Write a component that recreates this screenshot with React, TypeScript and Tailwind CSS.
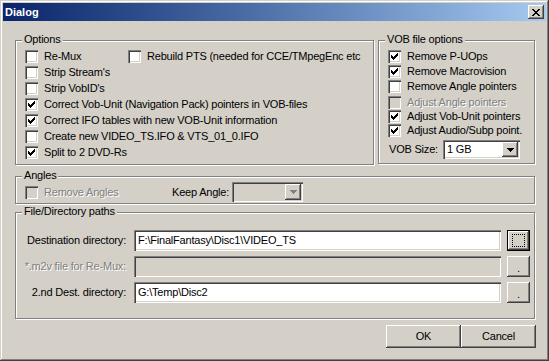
import type { ReactNode } from "react";

const sunken =
  "shadow-[inset_1px_1px_0_#808080,inset_2px_2px_0_#404040,inset_-1px_-1px_0_#fff,inset_-2px_-2px_0_#d4d0c8]";
const raised =
  "shadow-[inset_-1px_-1px_0_#404040,inset_1px_1px_0_#fff,inset_-2px_-2px_0_#808080,inset_2px_2px_0_#d4d0c8]";
const dim = "text-[#808080] [text-shadow:1px_1px_0_#fff]";

function Check({ checked, disabled }: { checked?: boolean; disabled?: boolean }) {
  return (
    <span
      className={
        "flex h-[13px] w-[13px] shrink-0 items-center justify-center " +
        sunken +
        (disabled ? " bg-[#d4d0c8]" : " bg-white")
      }
    >
      {checked && (
        <svg width="7" height="7" viewBox="0 0 7 7" shapeRendering="crispEdges">
          <path
            d="M0 2h1v3H0z M1 3h1v3H1z M2 4h1v3H2z M3 3h1v3H3z M4 2h1v3H4z M5 1h1v3H5z M6 0h1v3H6z"
            fill={disabled ? "#808080" : "#000"}
          />
        </svg>
      )}
    </span>
  );
}

function Row({
  checked,
  disabled,
  children,
  className = "h-[16px]",
}: {
  checked?: boolean;
  disabled?: boolean;
  children: ReactNode;
  className?: string;
}) {
  return (
    <div className={"flex items-center gap-[6px] whitespace-nowrap " + className}>
      <Check checked={checked} disabled={disabled} />
      <span className={disabled ? dim : ""}>{children}</span>
    </div>
  );
}

function Group({
  title,
  className,
  children,
}: {
  title: string;
  className: string;
  children: ReactNode;
}) {
  return (
    <div
      className={
        "relative border border-[#808080] shadow-[inset_1px_1px_0_#fff,1px_1px_0_#fff] " + className
      }
    >
      <span className="absolute -top-[8px] left-[6px] bg-[#d4d0c8] px-[2px] leading-[13px]">
        {title}
      </span>
      {children}
    </div>
  );
}

function Arrow({ disabled }: { disabled?: boolean }) {
  return (
    <span className={"flex h-full w-[16px] shrink-0 items-center justify-center bg-[#d4d0c8] " + raised}>
      <svg width="7" height="4" viewBox="0 0 7 4" shapeRendering="crispEdges">
        <path d="M0 0h7v1H0z M1 1h5v1H1z M2 2h3v1H2z M3 3h1v1H3z" fill={disabled ? "#808080" : "#000"} />
      </svg>
    </span>
  );
}

function Combo({ value, disabled, className }: { value?: string; disabled?: boolean; className: string }) {
  return (
    <div
      className={
        "flex items-stretch p-[2px] " + sunken + (disabled ? " bg-[#d4d0c8] " : " bg-white ") + className
      }
    >
      <span className="flex flex-1 items-center pl-[2px]">{value}</span>
      <Arrow disabled={disabled} />
    </div>
  );
}

function PathRow({
  label,
  value,
  disabled,
  focused,
}: {
  label: string;
  value?: string;
  disabled?: boolean;
  focused?: boolean;
}) {
  return (
    <div className="flex h-[21px] items-stretch">
      <span className={"flex w-[110px] items-center justify-end whitespace-nowrap " + (disabled ? dim : "")}>
        {label}
      </span>
      <div
        className={
          "ml-[8px] flex w-[367px] items-center pl-[4px] " + sunken + (disabled ? " bg-[#d4d0c8]" : " bg-white")
        }
      >
        {value}
      </div>
      {focused ? (
        <div className="ml-[6px] flex w-[23px] items-center justify-center border border-black bg-[#d4d0c8]">
          <div className={"flex h-full w-full items-center justify-center " + raised}>
            <span className="h-[13px] w-[13px] border border-dotted border-black" />
          </div>
        </div>
      ) : (
        <div className={"ml-[6px] flex w-[23px] items-end justify-center pb-[3px] leading-none " + raised}>
          .
        </div>
      )}
    </div>
  );
}

function Button({ children }: { children: ReactNode }) {
  return (
    <div className={"flex h-[23px] w-[75px] items-center justify-center bg-[#d4d0c8] " + raised}>
      {children}
    </div>
  );
}

export default function App() {
  return (
    <div
      className={
        "flex h-[361px] w-[549px] flex-col bg-[#d4d0c8] p-[3px] text-[11px] leading-[13px] tracking-[-0.2px] text-black font-['Liberation_Sans',Arial,sans-serif] " +
        "shadow-[inset_-1px_-1px_0_#404040,inset_1px_1px_0_#d4d0c8,inset_-2px_-2px_0_#808080,inset_2px_2px_0_#fff]"
      }
    >
      {/* title bar */}
      <div className="flex h-[18px] items-center justify-between bg-linear-to-r from-[#0a246a] to-[#a6caf0] pr-[2px] pl-[2px]">
        <span className="text-[11px] font-bold tracking-normal text-white">Dialog</span>
        <span className={"flex h-[14px] w-[16px] items-center justify-center bg-[#d4d0c8] " + raised}>
          <svg width="8" height="7" viewBox="0 0 8 7" shapeRendering="crispEdges">
            <path
              d="M0 0h2v1H0z M6 0h2v1H6z M1 1h2v1H1z M5 1h2v1H5z M2 2h4v1H2z M3 3h2v1H3z M2 4h4v1H2z M1 5h2v1H1z M5 5h2v1H5z M0 6h2v1H0z M6 6h2v1H6z"
              fill="#000"
            />
          </svg>
        </span>
      </div>

      <div className="flex flex-col pr-[11px] pl-[12px]">
        <div className="mt-[19px] flex gap-[4px]">
          <Group title="Options" className="h-[125px] w-[359px] pt-[7px] pl-[9px]">
            <div className="flex h-[16px] items-center">
              <div className="w-[103px]">
                <Row checked={false}>Re-Mux</Row>
              </div>
              <Row>Rebuild PTS (needed for CCE/TMpegEnc etc</Row>
            </div>
            <Row>Strip Stream's</Row>
            <Row>Strip VobID's</Row>
            <Row checked>Correct Vob-Unit (Navigation Pack) pointers in VOB-files</Row>
            <Row checked>Correct IFO tables with new VOB-Unit information</Row>
            <Row>Create new VIDEO_TS.IFO &amp; VTS_01_0.IFO</Row>
            <Row checked>Split to 2 DVD-Rs</Row>
          </Group>

          <Group title="VOB file options" className="h-[124px] w-[157px] pt-[8px] pl-[9px]">
            <Row checked className="h-[15px]">Remove P-UOps</Row>
            <Row checked className="h-[15px]">Remove Macrovision</Row>
            <Row className="h-[15px]">Remove Angle pointers</Row>
            <Row disabled className="mt-[1px] h-[14px]">Adjust Angle pointers</Row>
            <Row checked className="h-[14px]">Adjust Vob-Unit pointers</Row>
            <Row checked className="h-[14px]">Adjust Audio/Subp point.</Row>
            <div className="mt-[3px] flex h-[19px] items-center">
              <span className="w-[55px] pl-[1px]">VOB Size:</span>
              <Combo value="1 GB" className="h-[19px] w-[77px]" />
            </div>
          </Group>
        </div>

        <Group title="Angles" className="mt-[11px] h-[28px] pt-[5px] pl-[9px]">
          <div className="flex h-[20px] items-center">
            <div className="w-[147px]">
              <Row disabled>Remove Angles</Row>
            </div>
            <span className="w-[60px] whitespace-nowrap">Keep Angle:</span>
            <Combo disabled className="h-[20px] w-[71px]" />
          </div>
        </Group>

        <Group title="File/Directory paths" className="mt-[8px] flex h-[107px] flex-col gap-[5px] pt-[17px]">
          <PathRow label="Destination directory:" value="F:\FinalFantasy\Disc1\VIDEO_TS" focused />
          <PathRow label="*.m2v file for Re-Mux:" disabled />
          <PathRow label="2.nd Dest. directory:" value="G:\Temp\Disc2" />
        </Group>

        <div className="mt-[6px] -mr-[1px] flex justify-end">
          <Button>OK</Button>
          <Button>Cancel</Button>
        </div>
      </div>
    </div>
  );
}
